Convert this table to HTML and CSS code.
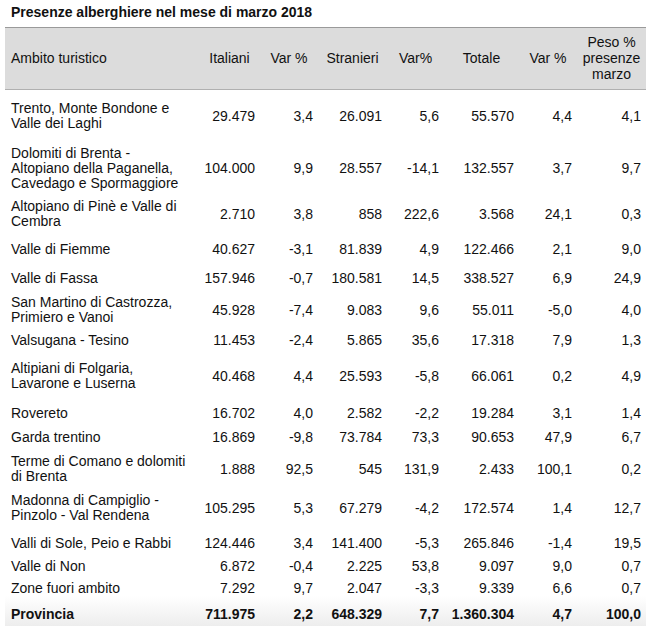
FILE: index.html
```html
<!DOCTYPE html>
<html lang="it">
<head>
<meta charset="utf-8">
<title>Presenze alberghiere nel mese di marzo 2018</title>
<link rel="stylesheet" href="styles.css">
</head>
<body>
<h1 class="title">Presenze alberghiere nel mese di marzo 2018</h1>
<table class="stats">
  <colgroup>
    <col class="c-name"><col class="c-it"><col class="c-v1"><col class="c-st"><col class="c-v2"><col class="c-tot"><col class="c-v3"><col class="c-peso">
  </colgroup>
  <thead>
    <tr>
      <th class="name">Ambito turistico</th>
      <th>Italiani</th>
      <th>Var %</th>
      <th>Stranieri</th>
      <th>Var%</th>
      <th>Totale</th>
      <th>Var %</th>
      <th>Peso %<br>presenze<br>marzo</th>
    </tr>
  </thead>
  <tbody>
    <tr class="pt11"><td class="name">Trento, Monte Bondone e<br>Valle dei Laghi</td><td>29.479</td><td>3,4</td><td>26.091</td><td>5,6</td><td>55.570</td><td>4,4</td><td>4,1</td></tr>
    <tr class="pt15"><td class="name">Dolomiti di Brenta -<br>Altopiano della Paganella,<br>Cavedago e Spormaggiore</td><td>104.000</td><td>9,9</td><td>28.557</td><td>-14,1</td><td>132.557</td><td>3,7</td><td>9,7</td></tr>
    <tr class="pt8"><td class="name">Altopiano di Pinè e Valle di<br>Cembra</td><td>2.710</td><td>3,8</td><td>858</td><td>222,6</td><td>3.568</td><td>24,1</td><td>0,3</td></tr>
    <tr class="pt13"><td class="name">Valle di Fiemme</td><td>40.627</td><td>-3,1</td><td>81.839</td><td>4,9</td><td>122.466</td><td>2,1</td><td>9,0</td></tr>
    <tr class="pt14"><td class="name">Valle di Fassa</td><td>157.946</td><td>-0,7</td><td>180.581</td><td>14,5</td><td>338.527</td><td>6,9</td><td>24,9</td></tr>
    <tr class="pt9"><td class="name">San Martino di Castrozza,<br>Primiero e Vanoi</td><td>45.928</td><td>-7,4</td><td>9.083</td><td>9,6</td><td>55.011</td><td>-5,0</td><td>4,0</td></tr>
    <tr class="pt8"><td class="name">Valsugana - Tesino</td><td>11.453</td><td>-2,4</td><td>5.865</td><td>35,6</td><td>17.318</td><td>7,9</td><td>1,3</td></tr>
    <tr class="pt13"><td class="name">Altipiani di Folgaria,<br>Lavarone e Luserna</td><td>40.468</td><td>4,4</td><td>25.593</td><td>-5,8</td><td>66.061</td><td>0,2</td><td>4,9</td></tr>
    <tr class="pt15"><td class="name">Rovereto</td><td>16.702</td><td>4,0</td><td>2.582</td><td>-2,2</td><td>19.284</td><td>3,1</td><td>1,4</td></tr>
    <tr class="pt9"><td class="name">Garda trentino</td><td>16.869</td><td>-9,8</td><td>73.784</td><td>73,3</td><td>90.653</td><td>47,9</td><td>6,7</td></tr>
    <tr class="pt9"><td class="name">Terme di Comano e dolomiti<br>di Brenta</td><td>1.888</td><td>92,5</td><td>545</td><td>131,9</td><td>2.433</td><td>100,1</td><td>0,2</td></tr>
    <tr class="pt9"><td class="name">Madonna di Campiglio -<br>Pinzolo - Val Rendena</td><td>105.295</td><td>5,3</td><td>67.279</td><td>-4,2</td><td>172.574</td><td>1,4</td><td>12,7</td></tr>
    <tr class="pt13"><td class="name">Valli di Sole, Peio e Rabbi</td><td>124.446</td><td>3,4</td><td>141.400</td><td>-5,3</td><td>265.846</td><td>-1,4</td><td>19,5</td></tr>
    <tr class="pt8"><td class="name">Valle di Non</td><td>6.872</td><td>-0,4</td><td>2.225</td><td>53,8</td><td>9.097</td><td>9,0</td><td>0,7</td></tr>
    <tr class="pt7"><td class="name">Zone fuori ambito</td><td>7.292</td><td>9,7</td><td>2.047</td><td>-3,3</td><td>9.339</td><td>6,6</td><td>0,7</td></tr>
    <tr class="pt11 total"><td class="name">Provincia</td><td>711.975</td><td>2,2</td><td>648.329</td><td>7,7</td><td>1.360.304</td><td>4,7</td><td>100,0</td></tr>
  </tbody>
</table>
</body>
</html>
```

FILE: styles.css
```css
html, body {
  margin: 0;
  padding: 0;
  background: #ffffff;
}

body {
  font-family: "Liberation Sans", Arial, Helvetica, sans-serif;
  font-size: 14px;
  color: #111111;
}

.title {
  margin: 0;
  padding: 4px 0 7px 11px;
  font-size: 14px;
  line-height: 16px;
  font-weight: bold;
  color: #111111;
}

.stats {
  margin-left: 5px;
  width: 641px;
  table-layout: fixed;
  border-collapse: collapse;
  border-spacing: 0;
}

.c-name { width: 194px; }
.c-it { width: 61px; }
.c-v1 { width: 58px; }
.c-st { width: 69px; }
.c-v2 { width: 57px; }
.c-tot { width: 75px; }
.c-v3 { width: 58px; }
.c-peso { width: 69px; }

.stats thead th {
  background: #dcdcdc;
  border-top: 1px solid #9a9a9a;
  border-bottom: 1px solid #b0b0b0;
  font-weight: normal;
  text-align: center;
  vertical-align: middle;
  line-height: 16px;
  padding: 6px 0 7px;
  white-space: nowrap;
}

.stats thead th.name {
  text-align: left;
  padding-left: 6px;
}

.stats tbody td {
  text-align: right;
  vertical-align: middle;
  line-height: 15px;
  padding: 0 5px 0 0;
  white-space: nowrap;
}

.stats tbody td.name {
  text-align: left;
  padding-left: 6px;
  padding-right: 0;
}

.pt7 td { padding-top: 7px !important; }
.pt8 td { padding-top: 8px !important; }
.pt9 td { padding-top: 9px !important; }
.pt11 td { padding-top: 11px !important; }
.pt13 td { padding-top: 13px !important; }
.pt14 td { padding-top: 14px !important; }
.pt15 td { padding-top: 15px !important; }

.stats tr.total td {
  font-weight: bold;
  padding-bottom: 6px;
}

.stats tr.total {
  background: linear-gradient(#ffffff, #ececec);
}
```
